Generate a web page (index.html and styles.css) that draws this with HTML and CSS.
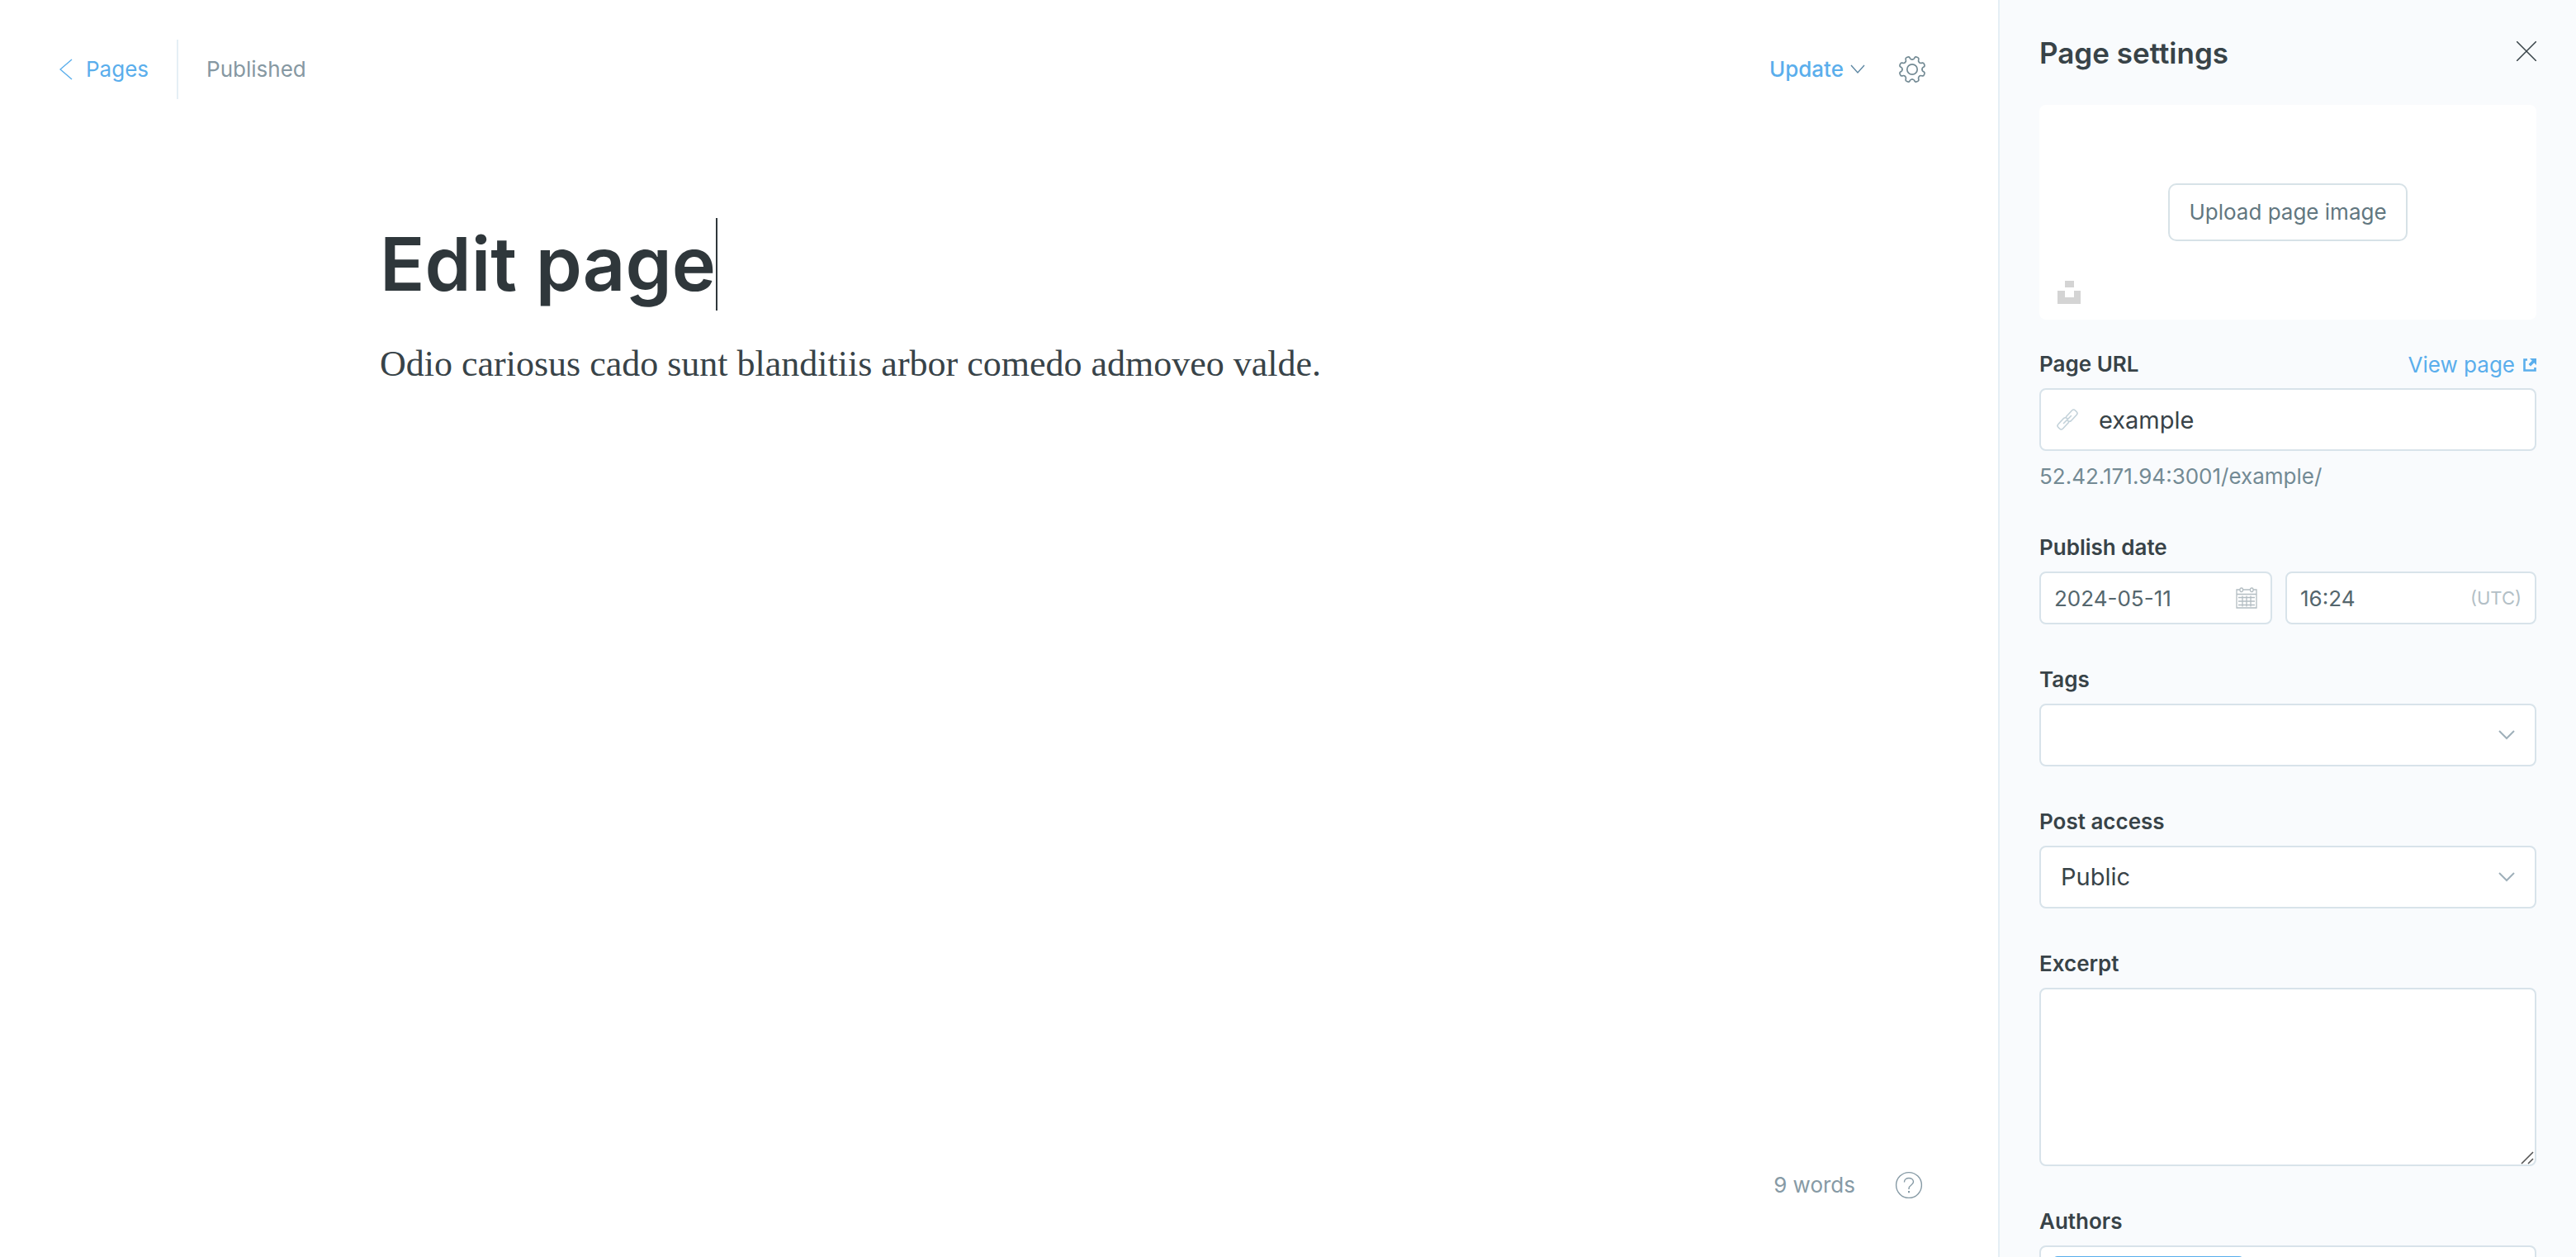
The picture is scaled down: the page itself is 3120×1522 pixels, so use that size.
FILE: index.html
```html
<!DOCTYPE html>
<html lang="en">
<head>
<meta charset="utf-8">
<meta name="viewport" content="width=device-width, initial-scale=1">
<title>Edit page</title>
<link rel="stylesheet" href="styles.css">
</head>
<body>
<div class="app">
  <main class="editor">
    <header class="topbar">
      <a class="back" href="#pages">
        <svg width="16" height="26" viewBox="0 0 16 26" aria-hidden="true"><path d="M15 1 1 13l14 12" fill="none" stroke="currentColor" stroke-width="1.4"/></svg>
        <span>Pages</span>
      </a>
      <span class="status">Published</span>
      <div class="actions">
        <button class="update" type="button">
          <span>Update</span>
          <svg width="18" height="12" viewBox="0 0 18 12" aria-hidden="true"><path d="M1 1l8 9 8-9" fill="none" stroke="#5d87a3" stroke-width="1.4"/></svg>
        </button>
        <button class="icon-button" type="button" aria-label="Settings">
          <svg width="34" height="34" viewBox="-17 -17 34 34" fill="none" stroke="currentColor" stroke-width="1.7" stroke-linecap="round" aria-hidden="true">
            <defs><path id="tooth" d="M-4.6-11.1C-3.3-11.6-2.9-12.1-2.8-13.1L-2.6-14.3C-2.4-15.4-1.8-15.8-1-15.8H1C1.8-15.8 2.4-15.4 2.6-14.3L2.8-13.1C2.9-12.1 3.3-11.6 4.6-11.1"/></defs>
            <use href="#tooth" transform="rotate(22.5)"/><use href="#tooth" transform="rotate(67.5)"/>
            <use href="#tooth" transform="rotate(112.5)"/><use href="#tooth" transform="rotate(157.5)"/>
            <use href="#tooth" transform="rotate(202.5)"/><use href="#tooth" transform="rotate(247.5)"/>
            <use href="#tooth" transform="rotate(292.5)"/><use href="#tooth" transform="rotate(337.5)"/>
            <circle r="6.2"/>
          </svg>
        </button>
      </div>
    </header>
    <article class="document">
      <h1 class="title">Edit page<span class="caret"></span></h1>
      <p class="body-text">Odio cariosus cado sunt blanditiis arbor comedo admoveo valde.</p>
    </article>
    <footer class="footer">
      <span>9 words</span>
      <a class="help" href="#help" aria-label="Help">
        <svg width="34" height="34" viewBox="0 0 34 34" fill="none" stroke="currentColor" stroke-width="1.4" aria-hidden="true"><circle cx="17" cy="17" r="15.4"/><path d="M11.5 13.5v-.5c0-2.700 2.300-4.500 5.500-4.500s5.500 2 5.500 4.600c0 3.900-5.500 3.900-5.500 7.900v1"/><path d="M17 24v2.200" stroke-width="2"/></svg>
      </a>
    </footer>
  </main>

  <aside class="settings">
    <header class="settings-head">
      <h2>Page settings</h2>
      <button class="icon-button close" type="button" aria-label="Close">
        <svg width="24" height="24" viewBox="0 0 24 24" aria-hidden="true"><path d="M0 0l24 24M24 0 0 24" stroke="currentColor" stroke-width="1.5"/></svg>
      </button>
    </header>
    <form class="settings-form">
      <div class="upload">
        <button class="upload-button" type="button">Upload page image</button>
        <button class="icon-button unsplash" type="button" aria-label="Unsplash">
          <svg width="28" height="28" viewBox="0 0 28 28" aria-hidden="true"><path d="M9 0h11v8H9zM0 12h9v8h11v-8h8v16H0z" fill="#d4d4d4"/></svg>
        </button>
      </div>

      <div class="field">
        <div class="label-row">
          <label for="url">Page URL</label>
          <a class="view" href="#view">View page
            <svg width="16" height="16" viewBox="0 0 16 16" aria-hidden="true"><path d="M5 1.500H1.500v13h13V11" fill="none" stroke="currentColor" stroke-width="2.600"/><path d="M8 0h8v8l-2.800-2.800-4.200 4.300-2.400-2.400 4.200-4.300z" fill="currentColor"/></svg>
          </a>
        </div>
        <div class="control">
          <svg class="lead" width="28" height="28" viewBox="0 0 28 28" fill="none" stroke="#c3d2da" stroke-width="1.6" stroke-linecap="round" stroke-linejoin="round" aria-hidden="true"><path d="M9.500 18.500l9-9M12.500 10.500l7-7.500q2-2 4 0l1.500 1.500q2 2 0 4l-6.500 7q-2 1.500-4 0M15.500 17.500l-7 7.500q-2 2-4 0L3 23.500q-2-2 0-4l6.500-7q2-1.500 4 0"/></svg>
          <input class="input input-url" id="url" type="text" value="example">
        </div>
        <p class="hint">52.42.171.94:3001/example/</p>
      </div>

      <div class="field">
        <div class="label-row"><label for="date">Publish date</label></div>
        <div class="date-row">
          <div class="control">
            <input class="input input-small" id="date" type="text" value="2024-05-11">
            <svg class="trail" width="26" height="26" viewBox="0 0 26 26" fill="none" stroke="#b3bdc2" stroke-width="1.300" aria-hidden="true"><path d="M5 3H1v22h24V3h-4M9 3h8M1 8.500h24M3 12.500h20M3 17h20M3 21.500h20M8 10.500v13M13 10.500v13M18 10.500v13"/><rect x="5" y="1" width="3.500" height="4.500" rx="1.500"/><rect x="17.500" y="1" width="3.500" height="4.500" rx="1.500"/></svg>
          </div>
          <div class="control">
            <input class="input input-small" type="text" value="16:24" aria-label="Publish time">
            <small class="trail zone">(UTC)</small>
          </div>
        </div>
      </div>

      <div class="field">
        <div class="label-row"><label for="tags">Tags</label></div>
        <div class="control">
          <select class="input" id="tags"><option></option></select>
          <svg class="trail arrow" width="20" height="12" viewBox="0 0 20 12" aria-hidden="true"><path d="M1 1l9 9 9-9" fill="none" stroke="#9fb0ba" stroke-width="2"/></svg>
        </div>
      </div>

      <div class="field">
        <div class="label-row"><label for="access">Post access</label></div>
        <div class="control">
          <select class="input" id="access"><option>Public</option></select>
          <svg class="trail arrow" width="20" height="12" viewBox="0 0 20 12" aria-hidden="true"><path d="M1 1l9 9 9-9" fill="none" stroke="#9fb0ba" stroke-width="2"/></svg>
        </div>
      </div>

      <div class="field">
        <div class="label-row"><label for="excerpt">Excerpt</label></div>
        <div class="control">
          <textarea class="input input-area" id="excerpt"></textarea>
          <svg class="grip" width="16" height="16" viewBox="0 0 16 16" aria-hidden="true"><path d="M1 15 15 1M9 15l6-6" stroke="#555" stroke-width="1.600"/></svg>
        </div>
      </div>

      <div class="field">
        <div class="label-row"><span class="label">Authors</span></div>
        <div class="input authors"><span class="token"></span></div>
      </div>
    </form>
  </aside>
</div>
</body>
</html>
```

FILE: styles.css
```css
*, *::before, *::after { box-sizing: border-box; }

body {
  margin: 0;
  color: #384348;
  background: #fff;
  font: 400 26px/32px Inter, "Liberation Sans", sans-serif;
}

h1, h2, p { margin: 0; }
a { color: inherit; text-decoration: none; }
svg { display: block; flex: none; }
button { padding: 0; border: 0; background: none; color: inherit; font: inherit; }
input, select, textarea { font: inherit; }

.app { display: flex; height: 100vh; overflow: hidden; }

/* Editor */
.editor { display: flex; flex: 1; flex-direction: column; min-width: 0; }

.topbar { display: flex; align-items: center; height: 72px; margin: 48px 87px 0 72px; }
.back {
  display: flex;
  align-items: center;
  gap: 16px;
  height: 72px;
  padding-right: 34px;
  border-right: 2px solid #e5eff5;
  color: #5aaeec;
}
.status { padding-left: 34px; color: #8698a2; }
.actions { display: flex; align-items: center; gap: 40px; margin-left: auto; }
.update { display: flex; align-items: center; gap: 8px; color: #5aaeec; font-weight: 500; }
.icon-button { color: #738a94; }

.document { flex: 1; width: 100%; max-width: 1500px; margin: 0 auto; padding-top: 144px; }
.title { color: #2f373b; font-size: 90px; font-weight: 600; line-height: 112px; }
.caret { display: inline-block; width: 2px; height: 112px; background: #2f373b; vertical-align: top; }
.body-text { margin-top: 35px; font: 44px/60px Georgia, "Liberation Serif", serif; }

.footer {
  display: flex;
  align-items: center;
  justify-content: flex-end;
  gap: 48px;
  padding: 0 91px 70px 0;
  color: #869aa5;
}

/* Settings panel */
.settings {
  flex: none;
  width: 700px;
  padding: 40px 48px 0;
  overflow: hidden;
  border-left: 2px solid #e5eff5;
  background: #f9fbfd;
}
.settings-head { display: flex; align-items: center; justify-content: space-between; height: 48px; }
.settings-head h2 { font-size: 35px; font-weight: 600; line-height: 48px; }
.close { padding-bottom: 4px; color: #384348; }

.upload {
  position: relative;
  display: flex;
  align-items: center;
  justify-content: center;
  height: 260px;
  margin: 39px 0 37px;
  border-radius: 8px;
  background: #fff;
}
.upload-button {
  height: 70px;
  padding: 0 23px;
  border: 2px solid #d7e2e7;
  border-radius: 10px;
  color: #627780;
}
.unsplash { position: absolute; bottom: 19px; left: 22px; }

.field { margin-bottom: 50px; }
.label-row { display: flex; justify-content: space-between; height: 34px; margin-bottom: 12px; line-height: 34px; }
label, .label { font-weight: 600; }
.view { display: flex; align-items: center; gap: 10px; height: 36px; color: #5aaeec; }

.control { position: relative; }
.input {
  display: block;
  width: 100%;
  height: 76px;
  padding: 0 24px;
  border: 2px solid #d8e3ea;
  border-radius: 8px;
  outline: 0;
  appearance: none;
  background: #fff;
  color: #384348;
  font-size: 29px;
}
.input-url { padding-left: 70px; }
.input-small { height: 64px; padding: 0 16px; color: #54666d; font-size: 26px; }
.input-area { height: 216px; padding: 16px 24px; resize: none; }
.hint { margin-top: 12px; color: #738a94; line-height: 38px; }

.lead { position: absolute; top: 24px; left: 20px; }
.trail { position: absolute; top: 19px; right: 18px; }
.zone { color: #b3bfc6; font-size: 22px; line-height: 26px; }
.arrow { top: 32px; right: 26px; }
.grip { position: absolute; right: 3px; bottom: 2px; }

.date-row { display: grid; grid-template-columns: 282fr 304fr; gap: 16px; }

.authors { padding: 11px 14px; }
.token { display: block; width: 232px; height: 48px; border-radius: 6px; background: #5aaeec; }
```
